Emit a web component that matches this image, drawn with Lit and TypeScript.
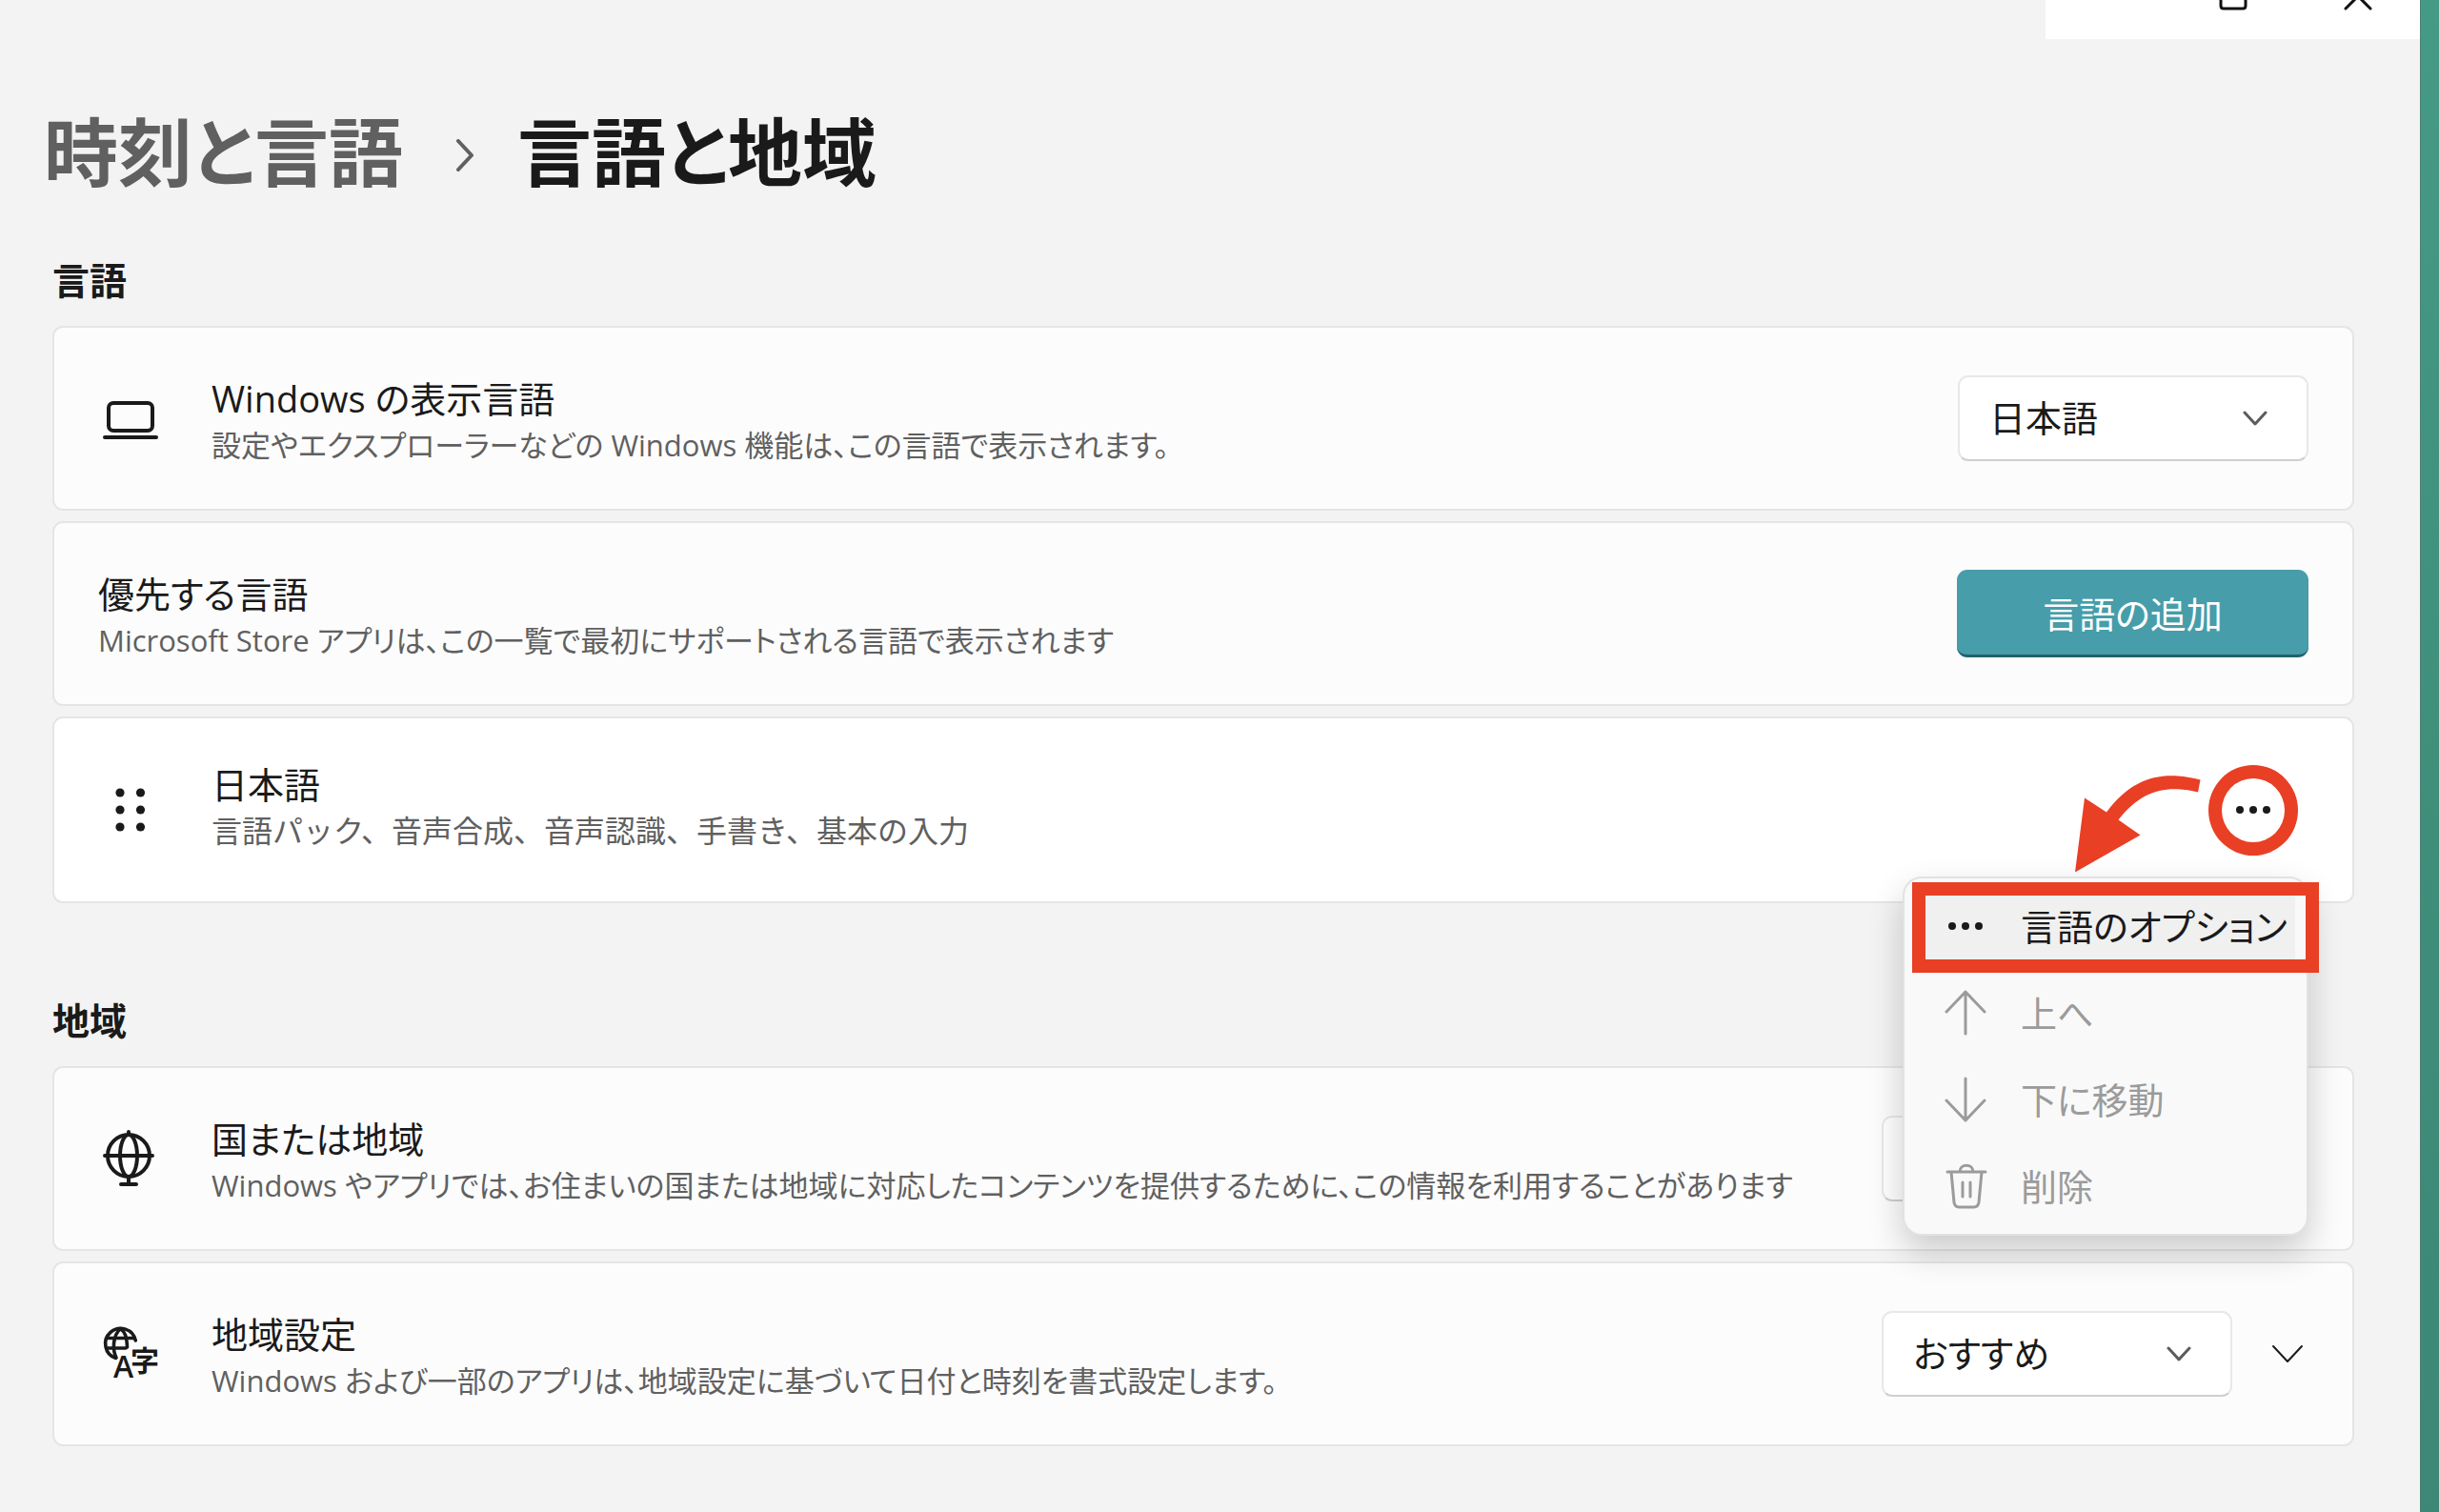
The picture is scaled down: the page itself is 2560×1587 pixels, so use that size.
import { LitElement, html, css, svg, nothing } from "lit";
import { customElement, property } from "lit/decorators.js";

const icons = {
  laptop: svg`<rect x="6" y="15" width="46" height="29" rx="5" /><path d="M2 51H56" />`,
  grip: svg`<g fill="currentColor" stroke="none">
    <circle cx="18" cy="13" r="4.6" /><circle cx="39.500" cy="13" r="4.6" />
    <circle cx="18" cy="31" r="4.6" /><circle cx="39.500" cy="31" r="4.6" />
    <circle cx="18" cy="49" r="4.6" /><circle cx="39.500" cy="49" r="4.6" /></g>`,
  globe: svg`<circle cx="27" cy="28" r="22" /><ellipse cx="27" cy="28" rx="9" ry="22" />
    <path d="M2 28H52M27 3V6M27 50V57M19 58H35" />`,
  script: svg`<g stroke-width="3.6">
    <path d="M13.500 35.500A16 16 0 1 1 34.300 17" /><path d="M14 35C10 27 10 12 18.500 4.500C23 8 25 12 25.500 24" />
    <path d="M4 14.500H33M4 25H24" /></g>
    <text class="latin" x="11" y="56">A</text><text class="kanji" x="29" y="49">字</text>`,
};

const chevron = (cls: string, w: number, h: number) => html`
  <svg class=${cls} width=${w + 4} height=${h + 4} viewBox="0 0 ${w + 4} ${h + 4}" aria-hidden="true">
    <path d="M2 2L${w / 2 + 2} ${h + 2}L${w + 2} 2" />
  </svg>`;

const dots = html`
  <svg class="dots" width="40" height="12" viewBox="0 0 40 12" aria-hidden="true">
    <circle cx="6" cy="6" r="4" /><circle cx="20" cy="6" r="4" /><circle cx="34" cy="6" r="4" />
  </svg>`;

const base = css`
  * { box-sizing: border-box; }
  svg { display: block; flex: none; fill: none; stroke: currentColor; stroke-linecap: round; stroke-linejoin: round; }
  .dots { fill: currentColor; stroke: none; }
  button, select { font: inherit; font-feature-settings: inherit; color: inherit; margin: 0; cursor: pointer; }
`;

@customElement("setting-card")
class SettingCard extends LitElement {
  @property() icon = "";
  @property() heading = "";
  @property() detail = "";

  static styles = [base, css`
    :host { display: block; }
    .card {
      display: flex; align-items: center; min-height: 194px; padding: 0 46px;
      background: #fcfcfc; border: 2px solid #e5e5e5; border-radius: 11px;
    }
    .icon { width: 58px; margin: 0 56px 0 5px; stroke-width: 4; overflow: visible; }
    .text { flex: 1; min-width: 0; padding-top: 6px; }
    h3 { margin: 0; font-size: 38px; line-height: 50px; font-weight: 400; color: #1a1a1a; }
    p { margin: 0; font-size: 31px; line-height: 48px; color: #606060; }
    :host([active]) .card { min-height: 196px; background: #fff; }
    :host([active]) .text { padding: 0 0 6px; }
    :host([active]) p { font-size: 32px; font-feature-settings: normal; }
    .latin { font: 600 32px "Open Sans", sans-serif; fill: currentColor; stroke: none; }
    .kanji { font: 700 30px "Noto Sans CJK JP", sans-serif; fill: currentColor; stroke: none; }
  `];

  render() {
    return html`
      <div class="card">
        ${this.icon
          ? html`<svg class="icon" width="58" height="62" viewBox="0 0 58 62" aria-hidden="true">
              ${icons[this.icon as keyof typeof icons]}</svg>`
          : nothing}
        <div class="text"><h3>${this.heading}</h3><p>${this.detail}</p></div>
        <slot></slot>
      </div>`;
  }
}

@customElement("combo-box")
class ComboBox extends LitElement {
  @property() label = "";
  @property() value = "";

  static styles = [base, css`
    :host { display: block; width: 368px; }
    :host([wide]) { width: 448px; }
    .box { display: grid; align-items: center; }
    select {
      grid-area: 1 / 1; width: 100%; height: 90px; padding: 0 80px 3px 31px; appearance: none;
      font-size: 38px; color: #1a1a1a; background: #fff;
      border: 2px solid #e8e8e8; border-bottom-color: #cfcfcf; border-radius: 11px;
    }
    .chevron { grid-area: 1 / 1; justify-self: end; margin-right: 43px; stroke-width: 3; color: #5c5c5c; pointer-events: none; }
  `];

  render() {
    return html`
      <div class="box">
        <select aria-label=${this.label}><option>${this.value}</option></select>
        ${chevron("chevron", 22, 12)}
      </div>`;
  }
}

@customElement("language-menu")
class LanguageMenu extends LitElement {
  static styles = [base, css`
    :host { display: block; }
    .menu {
      position: relative; padding: 8px 12px;
      background: #f9f9f9; border: 2px solid #e2e2e2; border-radius: 20px;
      box-shadow: 0 16px 36px rgba(0, 0, 0, 0.2);
    }
    ul { display: flex; flex-direction: column; gap: 7px; margin: 0; padding: 0; list-style: none; }
    button {
      display: flex; align-items: center; gap: 35px; width: 100%; height: 84px; padding: 0 0 0 29px;
      font-size: 38px; text-align: left; white-space: nowrap; background: none; border: 0; border-radius: 8px; color: #1a1a1a;
    }
    button.current { background: #f0f0f0; }
    button:disabled { color: #9b9b9b; }
    svg { stroke-width: 3; }
    .dots, .glyph { width: 46px; }
    .label { padding-bottom: 4px; }
    .mark { position: absolute; top: 4px; left: 8px; right: -13px; height: 95px; border: 14px solid #e93f25; pointer-events: none; }
  `];

  render() {
    const glyph = (shape: unknown) => html`<svg class="glyph" width="46" height="48" viewBox="0 0 46 48" aria-hidden="true">${shape}</svg>`;
    return html`
      <div class="menu">
        <ul>
          <li><button class="current">${dots}<span class="label">言語のオプション</span></button></li>
          <li><button disabled>${glyph(svg`<path d="M23 46V2M3 23L23 2L43 23" />`)}<span class="label">上へ</span></button></li>
          <li><button disabled>${glyph(svg`<path d="M23 2V46M3 25L23 46L43 25" />`)}<span class="label">下に移動</span></button></li>
          <li><button disabled>${glyph(svg`<path d="M4 9H44M17 9C17 0 31 0 31 9M8 9L11 41Q12 46 16 46H32Q36 46 37 41L40 9M20 20V35M28 20V35" />`)}<span class="label">削除</span></button></li>
        </ul>
        <div class="mark"></div>
      </div>`;
  }
}

@customElement("app-root")
class AppRoot extends LitElement {
  static styles = [base, css`
    :host {
      display: flex; min-height: 100vh; background: #f3f3f3; color: #1a1a1a;
      font-family: "Open Sans", "Noto Sans CJK JP", sans-serif; font-feature-settings: "palt";
    }
    .window { flex: 1; min-width: 0; }
    .desktop { width: 20px; border-left: 1px solid #4d7f72; background: linear-gradient(#459a86, #3f8f7b 50%, #3d8776); }
    .caption {
      display: flex; justify-content: flex-end; align-items: flex-start; gap: 101px; width: 393px; height: 41px;
      margin-left: auto; padding-right: 50px; background: #fff;
    }
    .caption button { padding: 0; border: 0; background: none; color: #111; }
    .caption svg { stroke-width: 3; }
    .content { padding: 67px 69px 60px 55px; }
    .crumbs { display: flex; align-items: center; height: 104px; margin-left: -9px; font-size: 78px; line-height: 104px; font-weight: 700; }
    .crumbs a { color: #606060; text-decoration: none; }
    h1 { margin: 0; font: inherit; }
    .crumbs svg { margin: 6px 45px 0 55px; stroke-width: 4; color: #606060; }
    h2 { margin: 54px 0 20px; font-size: 39px; line-height: 56px; font-weight: 700; }
    .stack { display: flex; flex-direction: column; gap: 11px; }
    .stack + h2 { margin-top: 95px; }
    .primary {
      width: 369px; height: 92px; padding: 0; font-size: 38px; color: #fff; background: #479da9;
      border: 0; border-bottom: 3px solid #21636d; border-radius: 11px;
    }
    .host { position: relative; z-index: 1; }
    .more { position: relative; display: grid; place-items: center; width: 94px; height: 95px; margin-right: 11px; padding: 0; border: 0; background: none; }
    .ring { position: absolute; inset: 0; border: 14px solid #e93f25; border-radius: 50%; }
    .arrow { position: absolute; top: 55px; right: 160px; pointer-events: none; stroke: none; }
    .popup { position: absolute; top: 168px; right: 48px; width: 426px; }
    .expand { width: 44px; height: 60px; display: grid; place-items: center; margin-left: 36px; padding: 0; border: 0; background: none; stroke-width: 2; }
  `];

  render() {
    return html`
      <div class="window">
        <div class="caption">
          <button aria-label="最大化">
            <svg width="30" height="11" viewBox="0 0 30 11"><path d="M2 -8V6Q2 9 5 9H25Q28 9 28 6V-8" /></svg>
          </button>
          <button aria-label="閉じる">
            <svg width="30" height="11" viewBox="0 0 30 11"><path d="M2 9L28 -17M28 9L2 -17" /></svg>
          </button>
        </div>
        <main class="content">
          <nav class="crumbs">
            <a href="#time">時刻と言語</a>
            <svg width="20" height="34" viewBox="0 0 20 34" aria-hidden="true"><path d="M3 2L17 17L3 32" /></svg>
            <h1>言語と地域</h1>
          </nav>

          <h2>言語</h2>
          <div class="stack">
            <setting-card icon="laptop" heading="Windows の表示言語"
              detail="設定やエクスプローラーなどの Windows 機能は、この言語で表示されます。">
              <combo-box label="Windows の表示言語" value="日本語"></combo-box>
            </setting-card>
            <setting-card heading="優先する言語"
              detail="Microsoft Store アプリは、この一覧で最初にサポートされる言語で表示されます">
              <button class="primary">言語の追加</button>
            </setting-card>
            <div class="host">
              <setting-card active icon="grip" heading="日本語"
                detail="言語パック、音声合成、音声認識、手書き、基本の入力">
                <button class="more" aria-label="その他のオプション">${dots}<span class="ring"></span></button>
              </setting-card>
              <svg class="arrow" width="134" height="110" viewBox="2177 807 134 110" aria-hidden="true">
                <path fill="#e93f25" d="M2309.500 818.500L2307 831.500C2275 824 2249 828 2223.500 860.500L2246.500 876.500L2178 915.500L2188 837.500L2211 852.500C2240 814 2271 809 2309.500 818.500Z" />
              </svg>
              <language-menu class="popup"></language-menu>
            </div>
          </div>

          <h2>地域</h2>
          <div class="stack">
            <setting-card icon="globe" heading="国または地域"
              detail="Windows やアプリでは、お住まいの国または地域に対応したコンテンツを提供するために、この情報を利用することがあります">
              <combo-box wide label="国または地域" value=""></combo-box>
            </setting-card>
            <setting-card icon="script" heading="地域設定"
              detail="Windows および一部のアプリは、地域設定に基づいて日付と時刻を書式設定します。">
              <combo-box label="地域設定" value="おすすめ"></combo-box>
              <button class="expand" aria-label="展開">${chevron("", 30, 16)}</button>
            </setting-card>
          </div>
        </main>
      </div>
      <div class="desktop"></div>`;
  }
}
